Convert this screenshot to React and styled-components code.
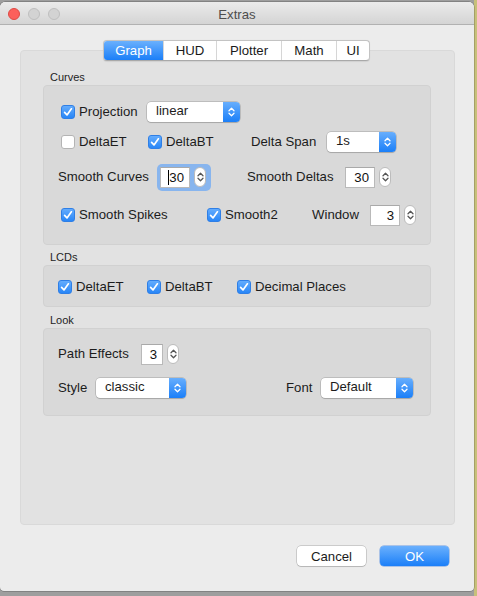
import React from 'react';
import styled, { createGlobalStyle } from 'styled-components';

const GlobalStyle = createGlobalStyle`
  html, body {
    margin: 0;
    padding: 0;
  }
  body {
    width: 477px;
    height: 596px;
    overflow: hidden;
    background: linear-gradient(to right, #9e9e9e 474px, #c7c07a 474px);
    font-family: "Liberation Sans", Arial, sans-serif;
    color: #1c1c1c;
  }
`;

const UpDown = ({ color = '#fff' }) => (
   <svg width="9" height="12" viewBox="0 0 9 12">
      <path
         d="M2 4.8 L4.5 2.3 L7 4.8 M2 7.2 L4.5 9.7 L7 7.2"
         fill="none"
         stroke={color}
         strokeWidth="1.3"
         strokeLinecap="round"
         strokeLinejoin="round"
      />
   </svg>
);

const Check = ({ checked }) => (
   <CheckBox $checked={checked}>
      {checked && (
         <svg width="14" height="14" viewBox="0 0 14 14">
            <path
               d="M3.6 7.4 L6 9.9 L10.4 3.8"
               fill="none"
               stroke="#fff"
               strokeWidth="1.7"
               strokeLinecap="round"
               strokeLinejoin="round"
            />
         </svg>
      )}
   </CheckBox>
);

const CheckItem = ({ checked, children }) => (
   <CheckWrap>
      <Check checked={checked} />
      <Text>{children}</Text>
   </CheckWrap>
);

const Combo = ({ w, children }) => (
   <ComboWrap $w={w}>
      <ComboText>{children}</ComboText>
      <ComboArrow>
         <UpDown />
      </ComboArrow>
   </ComboWrap>
);

const Spin = ({ w, value, focused }) => (
   <SpinWrap $focused={focused}>
      <SpinBox $w={w}>
         {focused && <Caret />}
         {value}
      </SpinBox>
      <Stepper>
         <UpDown color="#555" />
      </Stepper>
   </SpinWrap>
);

const App = () => {
   return (
      <>
         <GlobalStyle />
         <Window>
            <TitleBar>
               <Lights>
                  <Light $color="#fc605b" $border="#de4a44" />
                  <Light $color="#d3d3d3" $border="#bfbfbf" />
                  <Light $color="#d3d3d3" $border="#bfbfbf" />
               </Lights>
               <Title>Extras</Title>
               <span />
            </TitleBar>

            <Body>
               <TabBar>
                  <Tab $w={59} $active>
                     Graph
                  </Tab>
                  <Tab $w={53}>HUD</Tab>
                  <Tab $w={65}>Plotter</Tab>
                  <Tab $w={55}>Math</Tab>
                  <Tab $w={33}>UI</Tab>
               </TabBar>

               <Panel>
                  <GroupLabel>Curves</GroupLabel>
                  <GroupBox $pt={16} $pb={18}>
                     <Row $indent={17} $h={20}>
                        <Cell $w={86}>
                           <CheckItem checked>Projection</CheckItem>
                        </Cell>
                        <Combo w={93}>linear</Combo>
                     </Row>
                     <Row $indent={17} $h={20} $mt={10}>
                        <Cell $w={87}>
                           <CheckItem>DeltaET</CheckItem>
                        </Cell>
                        <Cell $w={103}>
                           <CheckItem checked>DeltaBT</CheckItem>
                        </Cell>
                        <Cell $w={76}>
                           <Text>Delta Span</Text>
                        </Cell>
                        <Combo w={69}>1s</Combo>
                     </Row>
                     <Row $indent={14} $h={28} $mt={11}>
                        <Cell $w={99}>
                           <Text>Smooth Curves</Text>
                        </Cell>
                        <Cell $w={90}>
                           <Spin w={30} value="30" focused />
                        </Cell>
                        <Cell $w={98}>
                           <Text>Smooth Deltas</Text>
                        </Cell>
                        <Spin w={30} value="30" />
                     </Row>
                     <Row $indent={17} $h={22} $mt={13}>
                        <Cell $w={146}>
                           <CheckItem checked>Smooth Spikes</CheckItem>
                        </Cell>
                        <Cell $w={105}>
                           <CheckItem checked>Smooth2</CheckItem>
                        </Cell>
                        <Cell $w={58}>
                           <Text>Window</Text>
                        </Cell>
                        <Spin w={30} value="3" />
                     </Row>
                  </GroupBox>

                  <GroupLabel $mt={5}>LCDs</GroupLabel>
                  <GroupBox $pt={10} $pb={8}>
                     <Row $indent={14} $h={22}>
                        <Cell $w={89}>
                           <CheckItem checked>DeltaET</CheckItem>
                        </Cell>
                        <Cell $w={90}>
                           <CheckItem checked>DeltaBT</CheckItem>
                        </Cell>
                        <CheckItem checked>Decimal Places</CheckItem>
                     </Row>
                  </GroupBox>

                  <GroupLabel $mt={6}>Look</GroupLabel>
                  <GroupBox $pt={14} $pb={17}>
                     <Row $indent={14} $h={22}>
                        <Cell $w={83}>
                           <Text>Path Effects</Text>
                        </Cell>
                        <Spin w={22} value="3" />
                     </Row>
                     <Row $indent={14} $h={20} $mt={13}>
                        <Cell $w={38}>
                           <Text>Style</Text>
                        </Cell>
                        <Cell $w={190}>
                           <Combo w={90}>classic</Combo>
                        </Cell>
                        <Cell $w={35}>
                           <Text>Font</Text>
                        </Cell>
                        <Combo w={92}>Default</Combo>
                     </Row>
                  </GroupBox>
               </Panel>
            </Body>

            <Footer>
               <Button>Cancel</Button>
               <Button $primary>OK</Button>
            </Footer>
         </Window>
      </>
   );
};

export default App;

const Window = styled.div`
   margin-top: 2px;
   width: 474px;
   height: 589px;
   box-sizing: border-box;
   background: #ececec;
   border-radius: 5px 5px 4px 4px;
   box-shadow: 0 0 0 0.5px rgba(0, 0, 0, 0.35);
   display: flex;
   flex-direction: column;
   overflow: hidden;
`;

const TitleBar = styled.div`
   height: 22px;
   flex: none;
   display: grid;
   grid-template-columns: 1fr auto 1fr;
   align-items: center;
   background: linear-gradient(#ebebeb, #d4d4d4);
   border-bottom: 1px solid #b1b1b1;
   border-radius: 5px 5px 0 0;
`;

const Lights = styled.div`
   display: flex;
   gap: 8px;
   padding-left: 8px;
   padding-top: 2px;
`;

const Light = styled.span`
   width: 12px;
   height: 12px;
   box-sizing: border-box;
   border-radius: 50%;
   background: ${(p) => p.$color};
   border: 0.5px solid ${(p) => p.$border};
`;

const Title = styled.div`
   font-size: 13.2px;
   color: #4d4d4d;
   padding-top: 2px;
`;

const Body = styled.div`
   display: flex;
   flex-direction: column;
   padding: 15px 19px 0 20px;
`;

const TabBar = styled.div`
   position: relative;
   z-index: 1;
   align-self: center;
   margin-left: -2px;
   display: flex;
   height: 21px;
   box-sizing: border-box;
   background: #fff;
   border: 1px solid #c3c3c3;
   border-bottom-color: #a9a9a9;
   border-radius: 4px;
   overflow: hidden;
   box-shadow: 0 0.5px 1px rgba(0, 0, 0, 0.08);
`;

const Tab = styled.div`
   width: ${(p) => p.$w}px;
   box-sizing: border-box;
   display: flex;
   align-items: center;
   justify-content: center;
   font-size: 13.2px;
   color: ${(p) => (p.$active ? '#fff' : '#1a1a1a')};
   background: ${(p) =>
      p.$active ? 'linear-gradient(#6ab0fd, #1b7ff8)' : 'transparent'};
   & + & {
      border-left: 1px solid #d6d6d6;
   }
`;

const Panel = styled.div`
   margin-top: -11px;
   height: 475px;
   box-sizing: border-box;
   background: #e2e2e2;
   border: 1px solid #d9d9d9;
   border-radius: 4px;
   padding: 19px 23px 0 22px;
   display: flex;
   flex-direction: column;
`;

const GroupLabel = styled.div`
   font-size: 11px;
   line-height: 14px;
   padding-left: 7px;
   margin-top: ${(p) => p.$mt || 0}px;
   margin-bottom: 1px;
   color: #1e1e1e;
`;

const GroupBox = styled.div`
   background: #d9d9d9;
   border: 1px solid #d1d1d1;
   border-radius: 4px;
   padding-top: ${(p) => p.$pt}px;
   padding-bottom: ${(p) => p.$pb}px;
   display: flex;
   flex-direction: column;
`;

const Row = styled.div`
   display: flex;
   align-items: center;
   height: ${(p) => p.$h}px;
   margin-top: ${(p) => p.$mt || 0}px;
   padding-left: ${(p) => p.$indent}px;
`;

const Cell = styled.div`
   width: ${(p) => p.$w}px;
   flex: none;
   display: flex;
   align-items: center;
`;

const Text = styled.span`
   font-size: 13.2px;
   line-height: 16px;
   color: #1c1c1c;
   white-space: nowrap;
`;

const CheckWrap = styled.div`
   display: flex;
   align-items: center;
   gap: 4px;
`;

const CheckBox = styled.span`
   width: 14px;
   height: 14px;
   box-sizing: border-box;
   border-radius: 3px;
   display: flex;
   align-items: center;
   justify-content: center;
   background: ${(p) =>
      p.$checked ? 'linear-gradient(#64acfd, #2886f7)' : '#fff'};
   border: ${(p) =>
      p.$checked ? '0.5px solid #2f7fe6' : '1px solid #b4b4b4'};
   svg {
      flex: none;
   }
`;

const ComboWrap = styled.div`
   width: ${(p) => p.$w}px;
   height: 20px;
   flex: none;
   display: flex;
   background: #fff;
   border-radius: 4px;
   box-shadow: 0 0 0 0.5px rgba(0, 0, 0, 0.25), 0 1px 1px rgba(0, 0, 0, 0.12);
   overflow: hidden;
`;

const ComboText = styled.span`
   flex: 1;
   font-size: 13.2px;
   line-height: 18px;
   padding-left: 9px;
   color: #1c1c1c;
`;

const ComboArrow = styled.span`
   width: 17px;
   display: flex;
   align-items: center;
   justify-content: center;
   background: linear-gradient(#67aefd, #1b7ff8);
`;

const SpinWrap = styled.div`
   display: flex;
   align-items: center;
   gap: 4px;
   flex: none;
   padding: ${(p) => (p.$focused ? '3px 5px 3px 3px' : '0')};
   background: ${(p) => (p.$focused ? '#88b5ee' : 'transparent')};
   border-radius: 5px;
`;

const SpinBox = styled.div`
   width: ${(p) => p.$w}px;
   height: 21px;
   box-sizing: border-box;
   display: flex;
   align-items: center;
   justify-content: flex-end;
   padding-right: 5px;
   background: #fff;
   border: 1px solid #b9b9b9;
   border-top-color: #a9a9a9;
   font-size: 13.2px;
   color: #111;
`;

const Caret = styled.span`
   width: 1px;
   height: 15px;
   background: #000;
`;

const Stepper = styled.div`
   width: 12px;
   height: 20px;
   box-sizing: border-box;
   display: flex;
   align-items: center;
   justify-content: center;
   background: #fff;
   border: 1px solid #bcbcbc;
   border-radius: 6px;
   svg {
      flex: none;
   }
`;

const Footer = styled.div`
   display: flex;
   justify-content: flex-end;
   gap: 14px;
   padding: 21px 25px 0 0;
`;

const Button = styled.div`
   width: 69px;
   height: 20px;
   box-sizing: border-box;
   display: flex;
   align-items: center;
   justify-content: center;
   font-size: 13.2px;
   border-radius: 4px;
   color: ${(p) => (p.$primary ? '#fff' : '#1a1a1a')};
   background: ${(p) =>
      p.$primary ? 'linear-gradient(#6ab0fd, #1b7ff8)' : '#fff'};
   box-shadow: ${(p) =>
      p.$primary
         ? '0 0 0 0.5px rgba(20, 100, 220, 0.6)'
         : '0 0 0 0.5px rgba(0, 0, 0, 0.28), 0 1px 1px rgba(0, 0, 0, 0.1)'};
`;
